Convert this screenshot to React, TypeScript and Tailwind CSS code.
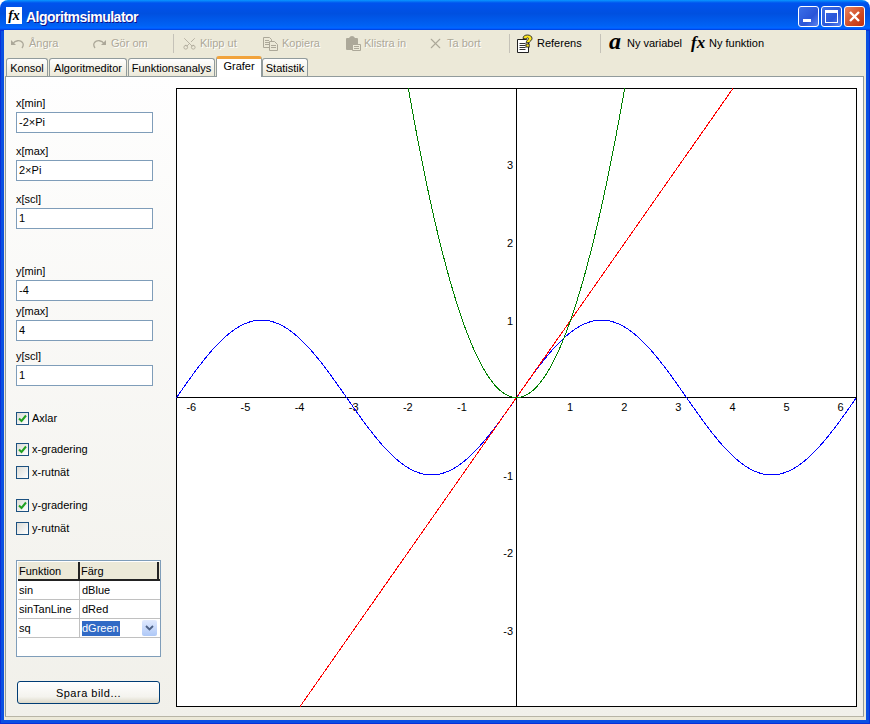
import React from "react";
import { X as XIcon, Scissors } from "lucide-react";

const G = "#aca899";

function Undo({ flip }: { flip?: boolean }) {
  return (
    <svg width="15" height="12" viewBox="0 0 15 12" fill="none" style={flip ? { transform: "scaleX(-1)" } : undefined}>
      <path d="M1 2v5h5z" fill={G} />
      <path d="M3 5.5C5 2.5 10 1.5 12.5 4.5 13.5 6 13.5 8 12 10" stroke={G} strokeWidth="1.3" />
    </svg>
  );
}

function Copy() {
  return (
    <svg width="15" height="14" viewBox="0 0 15 14" fill="none" stroke={G}>
      <path d="M.5.5h6l2 2v8h-8z" fill="#ece9d8" />
      <path d="M2 3.5h4M2 5.5h4M2 7.5h4" />
      <path d="M6.5 4.5h5l3 3v6h-8z" fill="#ece9d8" />
      <path d="M8 8.5h5M8 10.5h5" />
    </svg>
  );
}

function Paste() {
  return (
    <svg width="16" height="15" viewBox="0 0 16 15">
      <path d="M1 3q0-1 1-1h2q1-2 3-2t3 2h2q1 0 1 1v11H2q-1 0-1-1z" fill={G} />
      <path d="M7.5 8.5h8v6h-8z" fill="#ece9d8" stroke={G} />
      <path d="M9 10.5h5M9 12.5h5" stroke={G} />
    </svg>
  );
}

function Help() {
  return (
    <svg width="16" height="19" viewBox="0 0 16 19" fill="none">
      <path d="M.5 5.5h9l2 2v11h-11z" fill="#fff" stroke="#222" />
      <path d="M2.5 9.5h6M2.5 11.5h6M2.5 13.5h6M2.5 15.5h6" stroke="#333" />
      <path d="M6 4.5C6 2 8 1 10.5 1S15 2.3 15 4.5c0 2-2.3 2.6-2.8 4.2H9.2C9.2 6.300 11.500 5.800 11.500 4.500 11.500 3.500 9.500 3.500 9.200 5z" fill="#ffe81f" stroke="#222" strokeWidth=".9" />
      <rect x="9" y="10" width="3.200" height="3" fill="#ffe81f" stroke="#222" strokeWidth=".9" />
    </svg>
  );
}

function Tool({ cls, iconCls, icon, label, off }: { cls: string; iconCls: string; icon: React.ReactNode; label: string; off?: boolean }) {
  return (
    <div className={`flex items-center shrink-0 h-[20px] ${cls}`}>
      <div className={`flex items-center shrink-0 ${iconCls}`}>{icon}</div>
      <span className={off ? "text-[#aca899] [text-shadow:1px_1px_0_#fff] whitespace-nowrap" : "text-black whitespace-nowrap"}>{label}</span>
    </div>
  );
}

function Sep({ cls }: { cls: string }) {
  return <div className={`w-px h-[19px] bg-[#c5c2b8] shrink-0 ${cls}`} />;
}

function Tab({ label, cls, active }: { label: string; cls: string; active?: boolean }) {
  if (active) {
    return (
      <div className={`relative z-10 -mb-px h-[21px] bg-white rounded-t-[3px] border-x border-[#919b9c] border-t-[3px] border-t-[#f1a33c] flex items-center justify-center pb-[3px] ${cls}`}>
        {label}
      </div>
    );
  }
  return (
    <div className={`h-[18px] pt-px rounded-t-[3px] border-x border-t border-[#919b9c] bg-[linear-gradient(180deg,#ffffff,#f3f1e8_60%,#ece9d8)] flex items-center justify-center ${cls}`}>
      {label}
    </div>
  );
}

function Field({ label, value, cls }: { label: string; value: string; cls: string }) {
  return (
    <div className={cls}>
      <div className="h-[14px] leading-[14px] mb-[2px]">{label}</div>
      <div className="w-[137px] h-[21px] border border-[#7f9db9] bg-white pl-[2px] leading-[19px]">{value}</div>
    </div>
  );
}

function Check({ label, on, cls }: { label: string; on?: boolean; cls: string }) {
  return (
    <div className={`flex items-center h-[13px] gap-[3px] ${cls}`}>
      <div className="w-[13px] h-[13px] border border-[#1c5180] bg-[linear-gradient(135deg,#dcdcd7,#ffffff)] flex items-center justify-center">
        {on && (
          <svg width="9" height="9" viewBox="0 0 9 9" fill="none">
            <path d="M1 4.500l2.500 2.500L8 1.500" stroke="#21a121" strokeWidth="2" />
          </svg>
        )}
      </div>
      <span>{label}</span>
    </div>
  );
}

function Row({ a, b, sel }: { a: string; b: string; sel?: boolean }) {
  return (
    <div className="flex h-[19px] border-b border-[#c0c0c0] leading-[18px]">
      <div className="w-[62px] border-r border-[#c0c0c0] pl-px">{a}</div>
      <div className="w-[79px] relative pl-[2px] flex items-center">
        {sel ? <span className="bg-[#316ac5] text-white h-[15px] leading-[15px] pr-px">{b}</span> : b}
        {sel && (
          <div className="absolute right-[2px] top-px w-[15px] h-[16px] rounded-[2px] bg-[linear-gradient(180deg,#e1eafe,#aec8f7)] flex items-center justify-center">
            <svg width="9" height="6" viewBox="0 0 9 6" fill="none">
              <path d="M1 1l3.500 3.500L8 1" stroke="#4d6185" strokeWidth="1.800" />
            </svg>
          </div>
        )}
      </div>
    </div>
  );
}

const SX = 54.11;
const SY = 77.4;
const CX = 340.5;
const CY = 309.5;

function curve(f: (x: number) => number, from: number, to: number) {
  const pts: string[] = [];
  for (let p = from; p <= to; p += 1) {
    const x = (p - CX) / SX;
    pts.push(`${p},${(CY - f(x) * SY).toFixed(1)}`);
  }
  return pts.join(" ");
}

function Plot() {
  const xs = [-6, -5, -4, -3, -2, -1, 1, 2, 3, 4, 5, 6];
  const ys = [3, 2, 1, -1, -2, -3];
  return (
    <svg width="681" height="619" viewBox="0 0 681 619" className="mt-[11px] block shrink-0 bg-white">
      <g shapeRendering="crispEdges" fill="none" strokeWidth="1">
        <rect x="0.5" y="0.5" width="680" height="618" stroke="#000" />
        <path d={`M0 ${CY}H681M${CX} 0V619`} stroke="#000" />
      </g>
      {xs.map((k) => (
        <text key={k} x={CX + k * SX - 0.5} y={323} textAnchor="middle" fontSize="11" fill="#000">
          {k}
        </text>
      ))}
      {ys.map((k) => (
        <text key={k} x={337} y={CY - k * 77.25 + 4.6 - k / 3} textAnchor="end" fontSize="11" fill="#000">
          {k}
        </text>
      ))}
      <g shapeRendering="crispEdges" fill="none" strokeWidth="1">
        <polyline points={curve(Math.sin, 0, 680)} stroke="#0000ff" />
        <polyline points={`${CX - 4 * SX},${CY + 4 * 77.25} ${CX + 4 * SX},${CY - 4 * 77.25}`} stroke="#ff0000" />
        <polyline points={curve((x) => x * x, 232, 449)} stroke="#008000" />
      </g>
    </svg>
  );
}

export default function App() {
  return (
    <div className="w-[870px] h-[724px] flex flex-col bg-white overflow-hidden font-['Liberation_Sans',sans-serif] text-[11px] text-black">
      <div className="h-[30px] shrink-0 rounded-t-[8px] flex items-start pl-[6px] pr-[5px] bg-[linear-gradient(180deg,#0997ff_0%,#0053ee_10%,#0050e0_45%,#0062f5_86%,#0066ff_92%,#005bff_95%,#003dd7_100%)]">
        <div className="mt-[7px] w-[16px] h-[17px] bg-white flex items-center justify-center font-['Liberation_Serif',serif] italic font-bold text-[14px] leading-none">fx</div>
        <div className="ml-[4px] mt-[8px] leading-[18px] font-['Liberation_Sans',sans-serif] font-bold text-[14px] tracking-[-0.5px] text-white [text-shadow:1px_1px_0_#0f1089]">Algoritmsimulator</div>
        <div className="ml-auto mt-[6px] flex gap-[2px]">
          <div className="w-[21px] h-[21px] rounded-[3px] border border-white bg-[linear-gradient(135deg,#3c70e8,#2a55d8_60%,#5a84ef)] flex items-end pl-[4px] pb-[4px]">
            <div className="w-[8px] h-[3px] bg-white" />
          </div>
          <div className="w-[21px] h-[21px] rounded-[3px] border border-white bg-[linear-gradient(135deg,#3c70e8,#2a55d8_60%,#5a84ef)] flex items-center justify-center">
            <div className="w-[13px] h-[13px] border border-white border-t-[3px]" />
          </div>
          <div className="w-[21px] h-[21px] rounded-[3px] border border-white bg-[linear-gradient(135deg,#e9835f,#cf4a22_60%,#c2300e)] flex items-center justify-center">
            <svg width="13" height="13" viewBox="0 0 13 13" fill="none">
              <path d="M2 2l9 9M11 2l-9 9" stroke="#fff" strokeWidth="2.400" />
            </svg>
          </div>
        </div>
      </div>

      <div className="flex-1 min-h-0 flex flex-col px-[4px] pb-[4px] bg-[#0a50e2] shadow-[inset_0_0_0_1px_#0831d9]">
        <div className="flex-1 min-h-0 flex flex-col bg-[#ece9d8]">
          <div className="h-[26px] shrink-0 flex items-center pl-[6px] pt-px">
            <Tool cls="w-[82px]" iconCls="w-[19px]" off icon={<Undo />} label="Ångra" />
            <Tool cls="w-[81px]" iconCls="w-[19px]" off icon={<Undo flip />} label="Gör om" />
            <Sep cls="mr-[10px]" />
            <Tool cls="w-[79px]" iconCls="w-[16px]" off icon={<Scissors size={15} color={G} strokeWidth={1.300} className="-ml-[2px] -rotate-90" />} label="Klipp ut" />
            <Tool cls="w-[82px]" iconCls="w-[19px]" off icon={<Copy />} label="Kopiera" />
            <Tool cls="w-[83px]" iconCls="w-[19px]" off icon={<Paste />} label="Klistra in" />
            <Tool cls="w-[81px]" iconCls="w-[19px]" off icon={<XIcon size={17} color={G} strokeWidth={1.500} className="-ml-px" />} label="Ta bort" />
            <Sep cls="mr-[7px]" />
            <Tool cls="w-[83px]" iconCls="w-[20px]" icon={<Help />} label="Referens" />
            <Sep cls="mr-[8px]" />
            <Tool cls="w-[82px]" iconCls="w-[18px] font-['Liberation_Serif',serif] italic font-bold text-[24px] leading-none pb-[6px]" icon="a" label="Ny variabel" />
            <Tool cls="w-[80px]" iconCls="w-[18px] font-['Liberation_Serif',serif] italic font-bold text-[17px] leading-none pb-[2px]" icon="fx" label="Ny funktion" />
          </div>

          <div className="h-[20px] shrink-0 flex items-end pl-[2px]">
            <Tab label="Konsol" cls="w-[42px] mr-px" />
            <Tab label="Algoritmeditor" cls="w-[78px] mr-px" />
            <Tab label="Funktionsanalys" cls="w-[87px] mr-px" />
            <Tab label="Grafer" cls="w-[46px]" active />
            <Tab label="Statistik" cls="w-[46px]" />
          </div>

          <div className="flex-1 min-h-0 flex ml-px mr-[2px] mb-[3px] border border-[#919b9c] border-b-[#b8b5a6] bg-[linear-gradient(180deg,#fefefe,#f1f0ea)]">
            <div className="w-[170px] shrink-0 pl-[10px] pt-[19px] flex flex-col">
              <Field label="x[min]" value="-2×Pi" cls="" />
              <Field label="x[max]" value="2×Pi" cls="mt-[11px]" />
              <Field label="x[scl]" value="1" cls="mt-[11px]" />
              <Field label="y[min]" value="-4" cls="mt-[35px]" />
              <Field label="y[max]" value="4" cls="mt-[3px]" />
              <Field label="y[scl]" value="1" cls="mt-[8px]" />
              <Check label="Axlar" on cls="mt-[26px]" />
              <Check label="x-gradering" on cls="mt-[18px]" />
              <Check label="x-rutnät" cls="mt-[10px]" />
              <Check label="y-gradering" on cls="mt-[20px]" />
              <Check label="y-rutnät" cls="mt-[10px]" />
              <div className="mt-[25px] w-[145px] h-[97px] border border-[#7f9db9] bg-white pl-px pt-px">
                <div className="flex h-[19px] bg-[#ece9d8] border-b-2 border-[#222] leading-[18px]">
                  <div className="w-[62px] border-r-2 border-[#222] pl-px">Funktion</div>
                  <div className="w-[79px] border-r-2 border-[#222] pl-px">Färg</div>
                </div>
                <Row a="sin" b="dBlue" />
                <Row a="sinTanLine" b="dRed" />
                <Row a="sq" b="dGreen" sel />
              </div>
              <button className="mt-[24px] ml-px w-[143px] h-[23px] rounded-[3px] border border-[#003c74] bg-[linear-gradient(180deg,#ffffff,#f4f3ee_70%,#dcd8c8)] tracking-[0.5px] text-[11px] pt-px">
                Spara bild...
              </button>
            </div>
            <Plot />
          </div>
        </div>
      </div>
    </div>
  );
}
